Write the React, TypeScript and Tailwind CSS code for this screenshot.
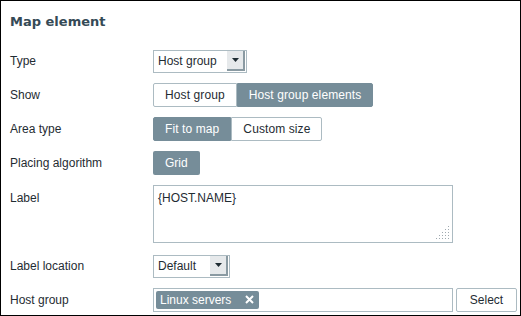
import { useState } from 'react';

const labelCls = "w-[143px] shrink-0 text-[12px] text-[#1f2c33]";

const Caret = () => (
  <span className="ml-auto flex h-[20px] w-[18px] items-center justify-center border-r-2 border-b-2 border-r-[#8a9aa2] border-b-[#8a9aa2] bg-[#e6e9eb]">
    <svg width="7" height="4" viewBox="0 0 7 4">
      <path d="M0 0h7L3.5 4z" fill="#1f2c33" />
    </svg>
  </span>
);

const Select = ({ value, width }: { value: string; width: string }) => (
  <div className={`flex h-[23px] items-center border border-[#acbbc2] bg-white pl-[4px] pr-px text-[12px] text-[#1f2c33] ${width}`}>
    <span>{value}</span>
    <Caret />
  </div>
);

const Segmented = ({ items, active }: { items: string[]; active: number }) => (
  <div className="flex h-[24px]">
    {items.map((it, i) => (
      <div
        key={it}
        className={
          "flex items-center px-[11px] text-[12px] tracking-[0.1px] border " +
          (i === active
            ? "bg-[#768d99] border-[#768d99] text-white"
            : "bg-white border-[#acbbc2] text-[#1f2c33]") +
          (i === 0 ? " rounded-l-[2px]" : " rounded-r-[2px]")
        }
      >
        {it}
      </div>
    ))}
  </div>
);

const Grip = () => (
  <svg className="absolute right-[2px] bottom-[2px]" width="14" height="14" viewBox="0 0 14 14">
    {[
      [12, 0], [12, 3], [9, 3], [12, 6], [9, 6], [6, 6], [12, 9], [9, 9], [6, 9], [3, 9], [12, 12], [9, 12], [6, 12], [3, 12], [0, 12],
    ].map(([x, y], i) => (
      <rect key={i} x={x} y={y} width="1" height="1" fill="#a0aab0" />
    ))}
  </svg>
);

export default function App() {
  const [show, setShow] = useState(1);
  return (
    <div className="h-[316px] w-[521px] border border-black bg-white font-['Liberation_Sans',Arial,sans-serif]">
      <h1 className="px-[9px] pt-[11px] font-['DejaVu_Sans',sans-serif] text-[13px] font-bold text-[#354a56]">
        Map element
      </h1>
      <div className="mt-[18px] flex flex-col gap-[10px] pl-[9px]">
        <div className="flex items-center">
          <div className={labelCls}>Type</div>
          <Select value="Host group" width="w-[94px]" />
        </div>
        <div className="flex items-center" onClick={() => setShow(show)}>
          <div className={labelCls}>Show</div>
          <Segmented items={["Host group", "Host group elements"]} active={show} />
        </div>
        <div className="flex items-center">
          <div className={labelCls}>Area type</div>
          <Segmented items={["Fit to map", "Custom size"]} active={0} />
        </div>
        <div className="flex items-center">
          <div className={labelCls}>Placing algorithm</div>
          <div className="flex h-[24px] items-center rounded-[2px] bg-[#768d99] px-[12px] text-[12px] text-white">Grid</div>
        </div>
        <div className="mb-[2px] flex items-start">
          <div className={labelCls + " pt-[4px]"}>Label</div>
          <div className="relative h-[58px] w-[300px] border border-[#acbbc2] px-[4px] pt-[3px] text-[12px] text-[#1f2c33]">
            {"{HOST.NAME}"}
            <Grip />
          </div>
        </div>
        <div className="flex items-center">
          <div className={labelCls}>Label location</div>
          <Select value="Default" width="w-[77px]" />
        </div>
        <div className="flex items-center">
          <div className={labelCls}>Host group</div>
          <div className="flex h-[24px] w-[300px] items-center border border-[#acbbc2] px-[2px]">
            <span className="flex h-[18px] items-center gap-[14px] rounded-[2px] bg-[#768d99] pl-[4px] pr-[5px] text-[12px] text-white">
              Linux servers
              <svg width="9" height="9" viewBox="0 0 9 9">
                <path d="M1 1l7 7M8 1L1 8" stroke="white" strokeWidth="2" />
              </svg>
            </span>
          </div>
          <div className="ml-[3px] flex h-[24px] w-[61px] items-center justify-center rounded-[2px] border border-[#acbbc2] bg-white text-[12px] text-[#1f2c33]">
            Select
          </div>
        </div>
      </div>
    </div>
  );
}
